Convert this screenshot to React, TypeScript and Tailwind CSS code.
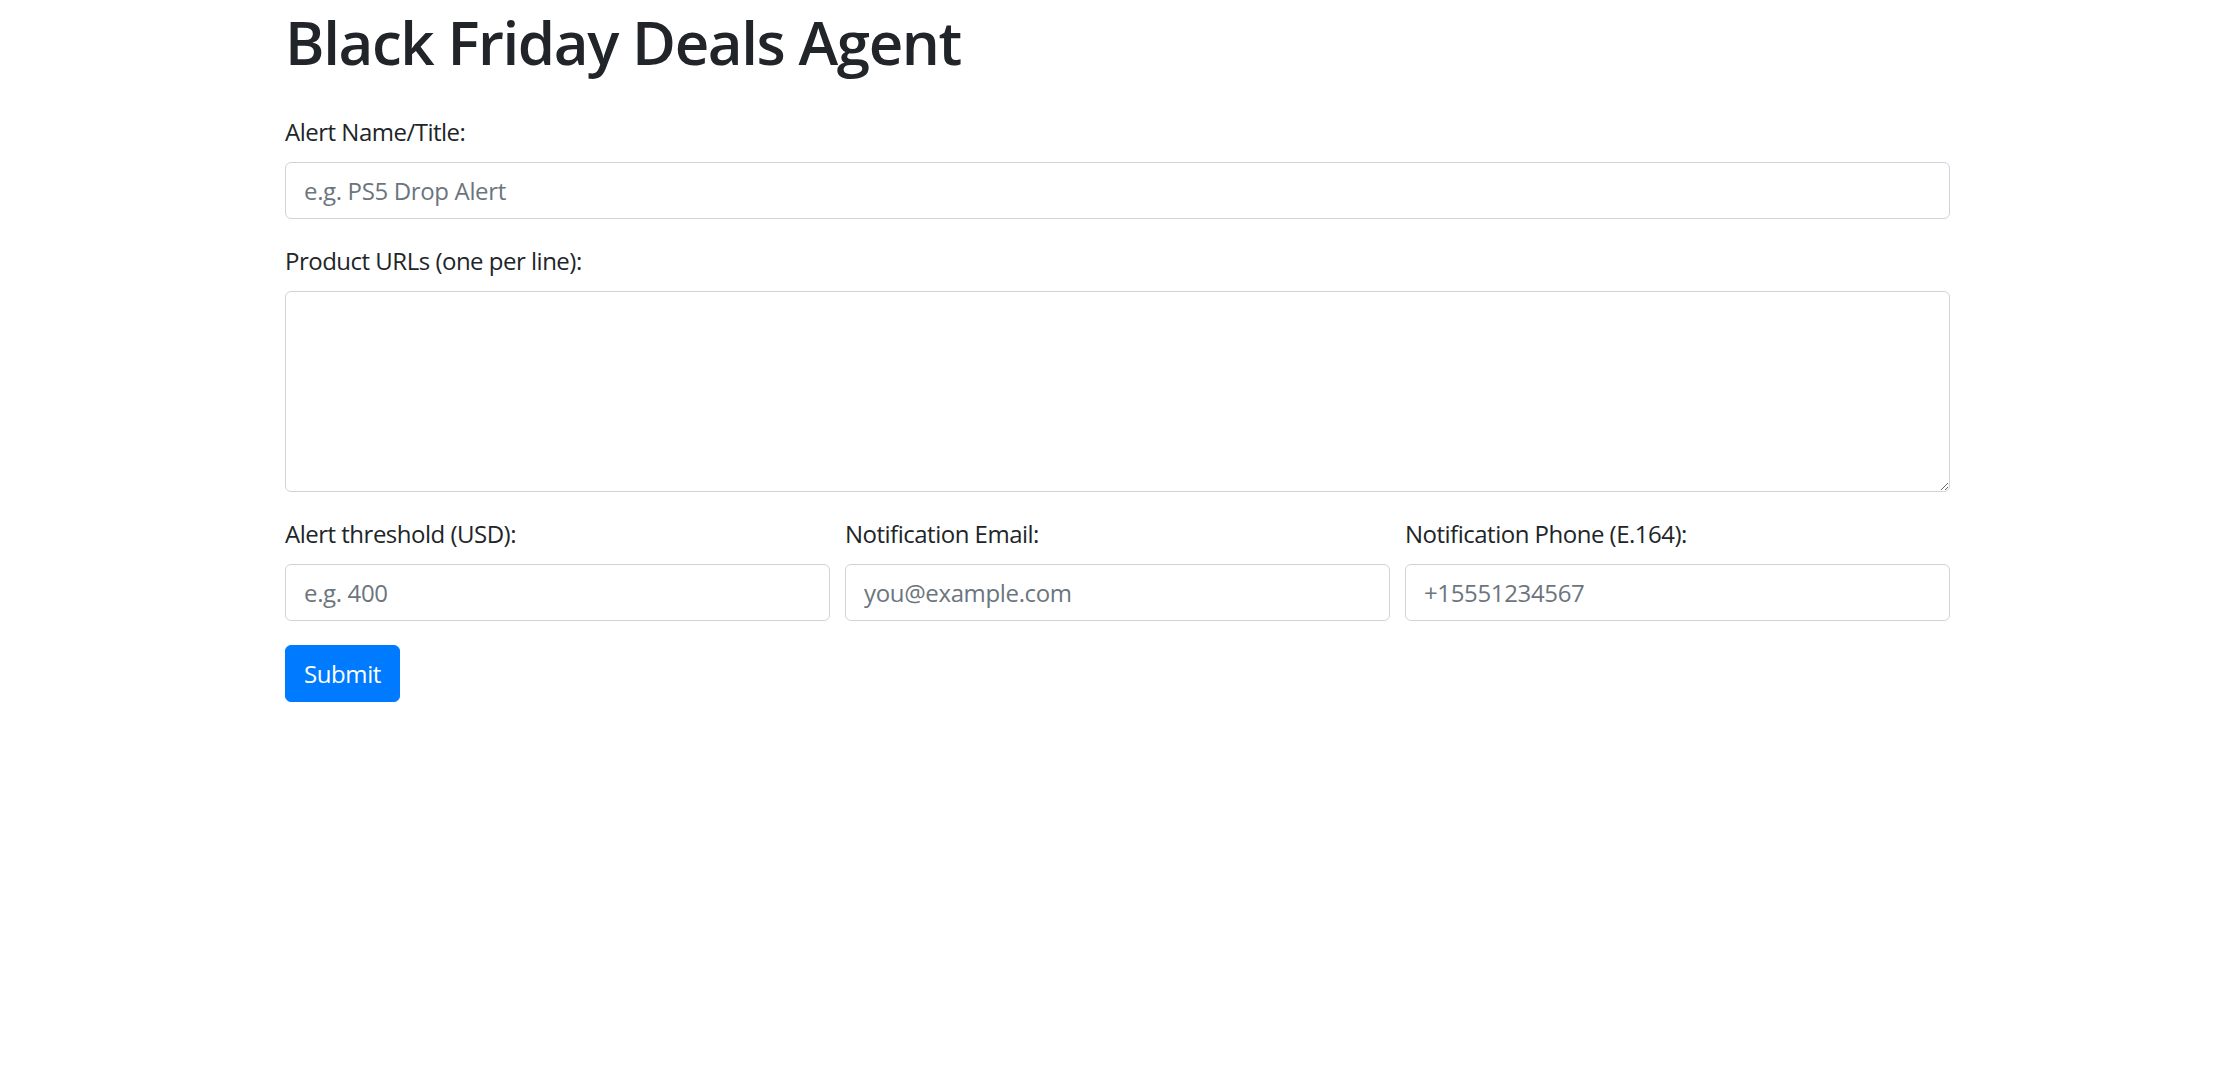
import React from "react"

// --- Small form pieces ---

function Field({
	label,
	placeholder,
	type = "text",
}: {
	label: string
	placeholder: string
	type?: string
}) {
	return (
		<div className="mb-[24px]">
			<label className="mb-[12px] block text-[24px] leading-[36px] tracking-[-0.5px]">{label}</label>
			<input
				type={type}
				placeholder={placeholder}
				className="block h-[57px] w-full rounded-[6px] border-[1.5px] border-[#ced4da] bg-white px-[18px] text-[24px] leading-[36px] tracking-[-0.35px] text-[#495057] outline-none placeholder:text-[#6c757d]"
			/>
		</div>
	)
}

// --- Page ---

export default function App() {
	return (
		<div className="min-h-screen bg-white font-['Open_Sans','Noto_Sans',sans-serif] text-[#212529]">
			<div className="mx-auto w-[1665px] pt-[6px]">
				<h1 className="mb-[36px] text-[60px] font-semibold leading-[72px] tracking-[-1.4px]">
					Black Friday Deals Agent
				</h1>

				<form onSubmit={(e) => e.preventDefault()}>
					<Field label="Alert Name/Title:" placeholder="e.g. PS5 Drop Alert" />

					<div className="mb-[24px]">
						<label className="mb-[12px] block text-[24px] leading-[36px] tracking-[-0.5px]">
							Product URLs (one per line):
						</label>
						<textarea
							rows={5}
							className="block h-[201px] w-full rounded-[6px] border-[1.5px] border-[#ced4da] bg-white px-[18px] py-[9px] text-[24px] leading-[36px] text-[#495057] outline-none"
						/>
					</div>

					<div className="grid grid-cols-3 gap-x-[15px]">
						<Field label="Alert threshold (USD):" placeholder="e.g. 400" type="number" />
						<Field label="Notification Email:" placeholder="you@example.com" type="email" />
						<Field label="Notification Phone (E.164):" placeholder="+15551234567" type="tel" />
					</div>

					<button
						type="submit"
						className="h-[57px] rounded-[6px] border-[1.5px] border-[#007bff] bg-[#007bff] px-[18px] text-[24px] leading-[36px] tracking-[-0.4px] text-white"
					>
						Submit
					</button>
				</form>
			</div>
		</div>
	)
}
